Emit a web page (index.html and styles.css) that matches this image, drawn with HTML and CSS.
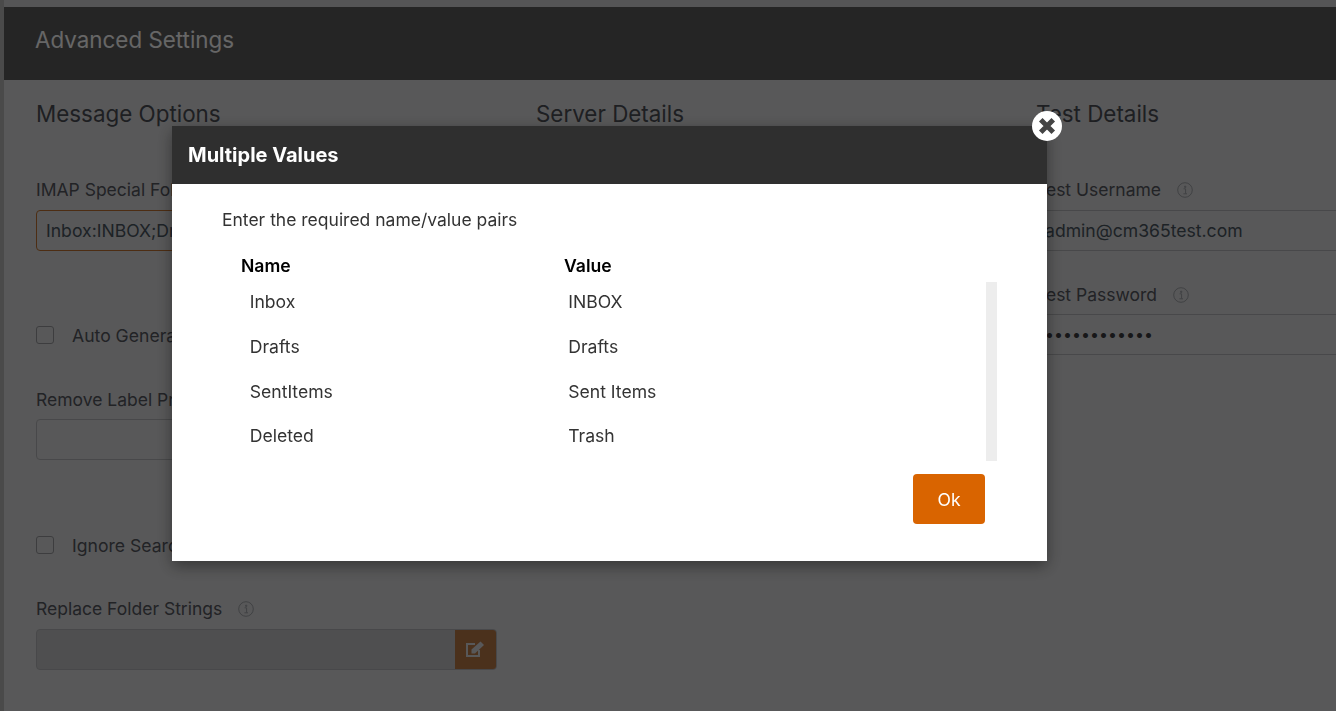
FILE: index.html
```html
<!DOCTYPE html>
<html lang="en">
<head>
<meta charset="utf-8">
<title>Advanced Settings</title>
<link rel="stylesheet" href="styles.css">
</head>
<body>
<div class="page">
  <header class="page-header">Advanced Settings</header>
  <main class="columns">
    <section class="col">
      <h2 class="col-title">Message Options</h2>
      <label class="field-label">IMAP Special Folders</label>
      <div class="input input-focus">Inbox:INBOX;Drafts:Drafts;SentItems:Sent Items</div>
      <div class="check-row check-first"><span class="check"></span><span>Auto Generate Folders</span></div>
      <label class="field-label label-remove">Remove Label Prefix</label>
      <div class="input"></div>
      <div class="check-row check-second"><span class="check"></span><span>Ignore Search Errors</span></div>
      <label class="field-label label-replace">Replace Folder Strings
        <svg class="info" viewBox="0 0 16 16"><circle cx="8" cy="8" r="7.3"/><path d="M6.6 6.8H8.6V11.6M6.4 11.800H10M7.6 4.2h1.2v1.2H7.6z"/></svg>
      </label>
      <div class="input input-disabled"><span class="edit-btn">
        <svg viewBox="0 0 20 20"><path class="edit-box" d="M9 4H1v12h12v-6"/><path class="edit-pen" d="M5.500 9.500 14.500 1.500 18 5 9 13.500H5.500z"/></svg>
      </span></div>
    </section>
    <section class="col">
      <h2 class="col-title">Server Details</h2>
    </section>
    <section class="col col-last">
      <h2 class="col-title">Test Details</h2>
      <label class="field-label">Test Username
        <svg class="info" viewBox="0 0 16 16"><circle cx="8" cy="8" r="7.3"/><path d="M6.6 6.8H8.6V11.6M6.4 11.800H10M7.6 4.2h1.2v1.2H7.6z"/></svg>
      </label>
      <div class="input input-flat">admin@cm365test.com</div>
      <label class="field-label label-password">Test Password
        <svg class="info" viewBox="0 0 16 16"><circle cx="8" cy="8" r="7.3"/><path d="M6.6 6.8H8.6V11.6M6.4 11.800H10M7.6 4.2h1.2v1.2H7.6z"/></svg>
      </label>
      <div class="input input-flat input-dots">••••••••••••</div>
    </section>
  </main>
</div>
<div class="overlay"></div>
<div class="modal">
  <div class="modal-header">Multiple Values</div>
  <button class="modal-close" aria-label="Close">
    <svg viewBox="0 0 16 16"><path d="M3 3 13 13M13 3 3 13"/></svg>
  </button>
  <div class="modal-body">
    <p class="modal-intro">Enter the required name/value pairs</p>
    <div class="pair-head"><span>Name</span><span>Value</span></div>
    <div class="pair-scroll">
      <div class="pair-list">
        <div class="pair"><span>Inbox</span><span>INBOX</span></div>
        <div class="pair"><span>Drafts</span><span>Drafts</span></div>
        <div class="pair"><span>SentItems</span><span>Sent Items</span></div>
        <div class="pair"><span>Deleted</span><span>Trash</span></div>
      </div>
      <div class="scroll-track"></div>
    </div>
    <div class="modal-actions"><button class="ok-btn">Ok</button></div>
  </div>
</div>
</body>
</html>
```
FILE: styles.css
```css
* { box-sizing: border-box; }
html, body { margin: 0; height: 100%; overflow: hidden; }
body {
  background: #d4d4d6;
  box-shadow: inset 4px 0 0 #b8b8ba;
  font-family: Inter, "Liberation Sans", sans-serif;
  padding: 7px 0 0 4px;
  color: #212529;
}
.page { background: #dcdcde; height: 704px; overflow: hidden; }
.page-header {
  height: 73px;
  background: #5c5c5e;
  color: #fff;
  font-size: 22.400px;
  line-height: 66px;
  padding-left: 31px;
}
.columns { display: grid; grid-template-columns: 500px 500px 1fr; padding: 0 0 0 32px; }
.col { padding-right: 39px; }
.col-last { padding-right: 0; }
.col-title { margin: 18px 0 0; font-size: 22.400px; line-height: 32px; font-weight: 400; height: 80px; color: #4c4f56; }
.field-label { display: block; font-size: 17.500px; line-height: 24px; height: 32px; color: #55575f; }
.info { width: 16px; height: 16px; margin-left: 11px; vertical-align: -2px; fill: none; stroke: #a0a3a8; stroke-width: 1; }
.input {
  height: 41px;
  border: 1px solid #b4b5b8;
  border-radius: 4px;
  padding: 0 9px;
  font-size: 17.600px;
  line-height: 39px;
  white-space: nowrap;
  overflow: hidden;
  position: relative;
  color: #4a5560;
}
.input-focus { border-color: #c07230; }
.input-disabled { background: #c6c6c9; padding: 0; }
.input-flat { border-width: 1px 0; border-radius: 0; }
.input-dots { font-size: 16px; color: #3a3a40; }
.check-row { display: flex; align-items: center; gap: 18px; font-size: 17.600px; color: #55575f; height: 24px; }
.check-first { margin-top: 72px; }
.check-second { margin-top: 73px; }
.check { width: 18px; height: 18px; border: 1px solid #98999d; border-radius: 3px; }
.label-remove { margin-top: 41px; height: 31px; }
.label-replace { margin-top: 40px; }
.label-password { margin-top: 32px; height: 31px; }
.edit-btn {
  position: absolute;
  right: 0;
  top: 0;
  width: 41px;
  height: 39px;
  background: #bc7a48;
  display: flex;
  align-items: center;
  justify-content: center;
}
.edit-btn svg { width: 20px; height: 20px; }
.edit-box { fill: none; stroke: #dcdcde; stroke-width: 2; }
.edit-pen { fill: #dcdcde; }
.overlay { position: fixed; inset: 0; background: rgba(0, 0, 0, .6); }
.modal {
  position: fixed;
  left: 172px;
  top: 126px;
  width: 875px;
  height: 435px;
  background: #fff;
  box-shadow: 0 5px 15px rgba(0, 0, 0, .4);
}
.modal-header {
  height: 58px;
  background: #2f2f2f;
  color: #fff;
  font-size: 20px;
  font-weight: 700;
  line-height: 58px;
  padding-left: 16px;
}
.modal-close {
  position: absolute;
  right: -15px;
  top: -15px;
  width: 30px;
  height: 30px;
  padding: 0;
  border: 0;
  border-radius: 50%;
  background: #fff;
  display: flex;
  align-items: center;
  justify-content: center;
}
.modal-close svg { width: 20px; height: 20px; fill: none; stroke: #444; stroke-width: 4; }
.modal-body { padding: 24px 50px 0; color: #333; }
.modal-intro { margin: 0; font-size: 17.500px; line-height: 24px; }
.pair-head { display: flex; margin: 22px 0 0 19px; font-size: 17.600px; font-weight: 600; line-height: 24px; color: #000; }
.pair-head span:first-child { width: 323px; }
.pair-scroll { display: flex; margin-top: 4px; height: 179px; }
.pair-list { width: 764px; padding: 0.300px 0 0 27.700px; }
.pair { display: flex; height: 44.700px; align-items: flex-start; font-size: 17.600px; line-height: 40px; }
.pair span:first-child { width: 318.500px; }
.scroll-track { width: 11px; background: #ededed; }
.modal-actions { display: flex; justify-content: flex-end; width: 763px; margin-top: 13px; }
.ok-btn {
  width: 72px;
  height: 50px;
  border: 0;
  border-radius: 4px;
  background: #d96400;
  color: #fff;
  font-family: inherit;
  font-size: 17.600px;
}
```
